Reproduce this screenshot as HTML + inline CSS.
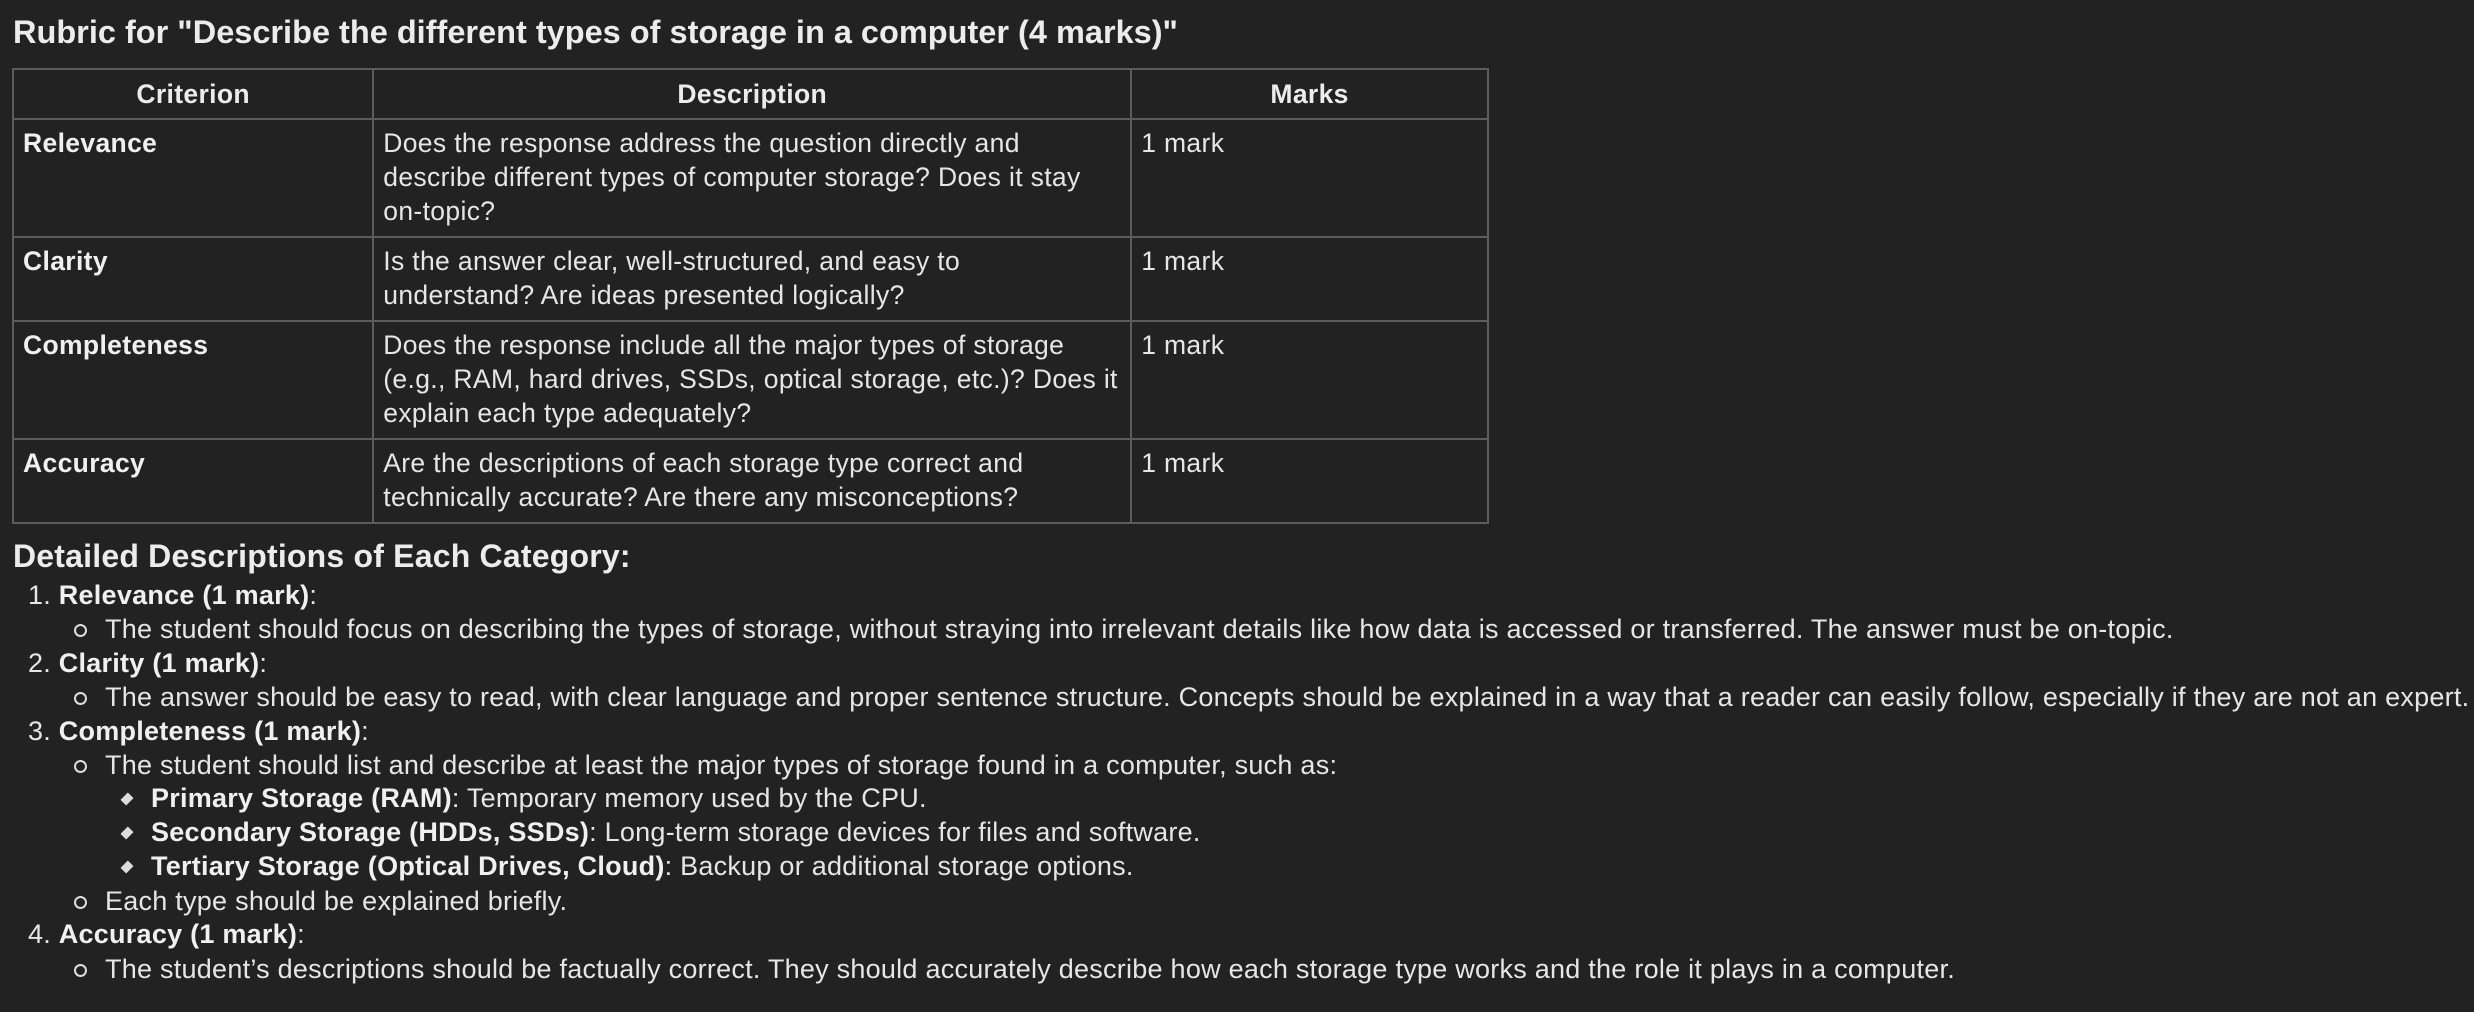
<!DOCTYPE html>
<html><head><meta charset="utf-8"><style>
html,body{margin:0;padding:0;background:#222222;}
body{width:2474px;height:1012px;overflow:hidden;position:relative;color:#e6e6e6;font-family:"Liberation Sans",sans-serif;font-size:27px;letter-spacing:0.25px;}
.a{position:absolute;white-space:nowrap;line-height:34px;}
b{font-weight:bold;color:#f0f0f0}
h1{position:absolute;left:13px;top:12px;margin:0;font-size:32.5px;line-height:40px;font-weight:bold;color:#ececec;white-space:nowrap;letter-spacing:0}
h2{position:absolute;left:13px;top:537px;margin:0;font-size:32px;line-height:38px;font-weight:bold;color:#ececec;white-space:nowrap;letter-spacing:0.2px}
table{position:absolute;left:12px;top:68px;border-collapse:collapse;width:1477px;}
td,th{border:2px solid #5c5c5c;vertical-align:top;padding:6px 9px 8px;line-height:34px;font-size:26.5px;letter-spacing:0.35px;text-align:left;white-space:nowrap}
th{text-align:center;vertical-align:middle;padding:0;height:48px;font-weight:bold;color:#ececec}
td:first-child{font-weight:bold;color:#f0f0f0}
.ci{position:absolute;width:9px;height:9px;border:2px solid #ddd;border-radius:50%;}
.di{position:absolute;width:8px;height:8px;background:#ddd;transform:rotate(45deg) scaleY(1.3);}
</style></head><body>
<h1>Rubric for "Describe the different types of storage in a computer (4 marks)"</h1>
<table>
<colgroup><col style="width:361px"><col style="width:758px"><col style="width:358px"></colgroup>
<tr><th>Criterion</th><th>Description</th><th>Marks</th></tr>
<tr style="height:118px"><td>Relevance</td><td>Does the response address the question directly and<br>describe different types of computer storage? Does it stay<br>on-topic?</td><td>1 mark</td></tr>
<tr style="height:84px"><td>Clarity</td><td>Is the answer clear, well-structured, and easy to<br>understand? Are ideas presented logically?</td><td>1 mark</td></tr>
<tr style="height:118px"><td>Completeness</td><td>Does the response include all the major types of storage<br>(e.g., RAM, hard drives, SSDs, optical storage, etc.)? Does it<br>explain each type adequately?</td><td>1 mark</td></tr>
<tr style="height:82px"><td>Accuracy</td><td>Are the descriptions of each storage type correct and<br>technically accurate? Are there any misconceptions?</td><td>1 mark</td></tr>
</table>
<h2>Detailed Descriptions of Each Category:</h2>

<div class="a" style="left:28px;top:578px">1. <b>Relevance (1 mark)</b>:</div>
<div class="ci" style="left:74px;top:624px"></div>
<div class="a" style="left:105px;top:612px">The student should focus on describing the types of storage, without straying into irrelevant details like how data is accessed or transferred. The answer must be on-topic.</div>

<div class="a" style="left:28px;top:646px">2. <b>Clarity (1 mark)</b>:</div>
<div class="ci" style="left:74px;top:692px"></div>
<div class="a" style="left:105px;top:680px">The answer should be easy to read, with clear language and proper sentence structure. Concepts should be explained in a way that a reader can easily follow, especially if they are not an expert.</div>

<div class="a" style="left:28px;top:714px">3. <b>Completeness (1 mark)</b>:</div>
<div class="ci" style="left:74px;top:760px"></div>
<div class="a" style="left:105px;top:748px">The student should list and describe at least the major types of storage found in a computer, such as:</div>
<div class="di" style="left:123px;top:795px"></div>
<div class="a" style="left:151px;top:781px"><b>Primary Storage (RAM)</b>: Temporary memory used by the CPU.</div>
<div class="di" style="left:123px;top:829px"></div>
<div class="a" style="left:151px;top:815px"><b>Secondary Storage (HDDs, SSDs)</b>: Long-term storage devices for files and software.</div>
<div class="di" style="left:123px;top:863px"></div>
<div class="a" style="left:151px;top:849px"><b>Tertiary Storage (Optical Drives, Cloud)</b>: Backup or additional storage options.</div>
<div class="ci" style="left:74px;top:896px"></div>
<div class="a" style="left:105px;top:884px">Each type should be explained briefly.</div>

<div class="a" style="left:28px;top:917px">4. <b>Accuracy (1 mark)</b>:</div>
<div class="ci" style="left:74px;top:964px"></div>
<div class="a" style="left:105px;top:952px">The student’s descriptions should be factually correct. They should accurately describe how each storage type works and the role it plays in a computer.</div>
</body></html>
